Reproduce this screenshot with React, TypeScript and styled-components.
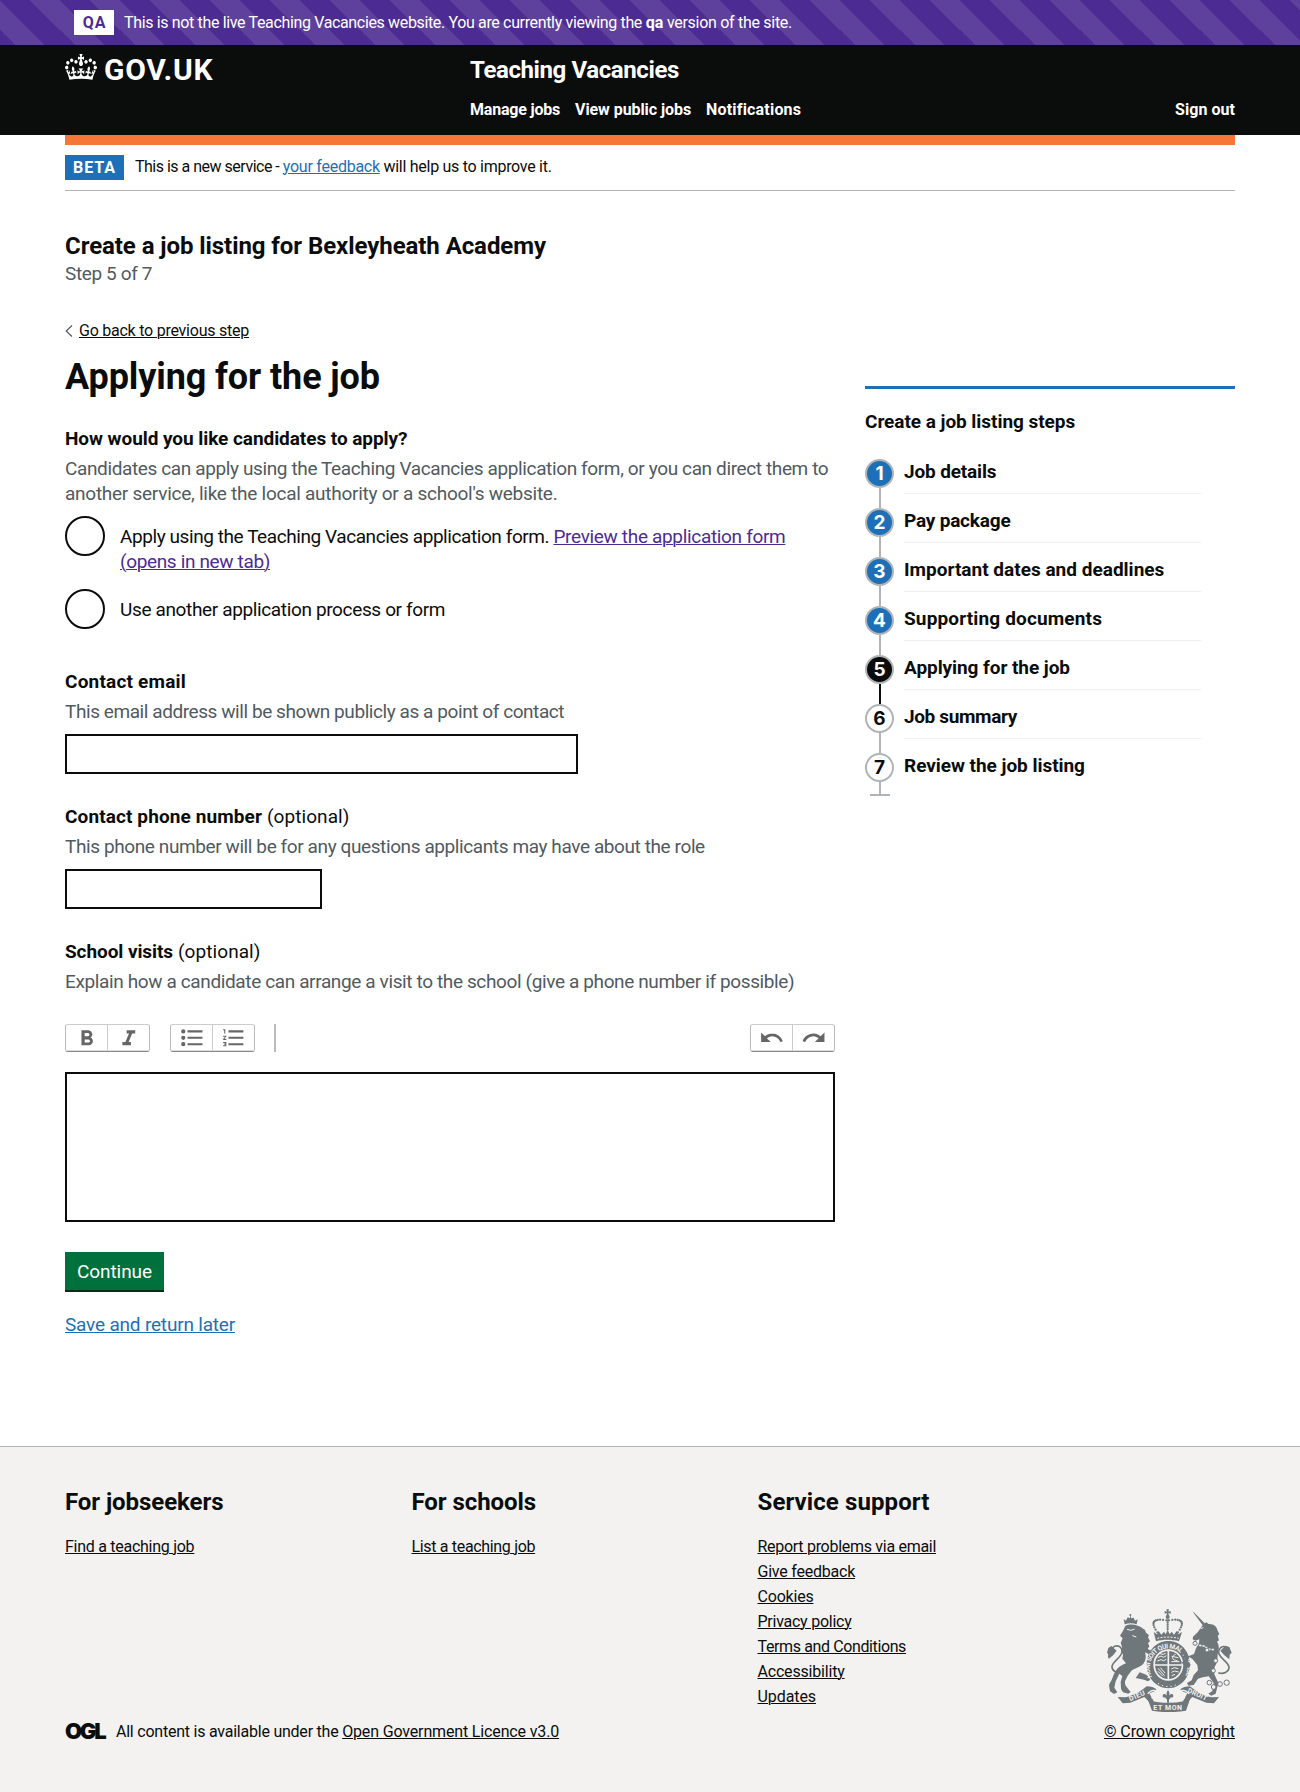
import React from 'react';
import styled, { createGlobalStyle } from 'styled-components';

const c = {
  ink: '#0b0c0c',
  grey: '#505a5f',
  line: '#b1b4b6',
  pale: '#f3f2f1',
  blue: '#1d70b8',
  purple: '#4c2c92',
  green: '#00703c',
};

const GlobalStyle = createGlobalStyle`
  *, *::before, *::after { box-sizing: border-box; }
  body {
    margin: 0;
    background: ${c.pale};
    color: ${c.ink};
    font-family: Roboto, "Liberation Sans", sans-serif;
    font-size: 19px;
    line-height: 25px;
    font-kerning: normal;
  }
  h1, h2, p, ul, ol { margin: 0; padding: 0; }
  ul, ol { list-style: none; }
`;

type Tracked = { $track?: number };

const Page = styled.div`
  min-height: 1792px;
  background: #fff;
  display: flex;
  flex-direction: column;
`;

const Container = styled.div`
  width: 1170px;
  margin: 0 auto;
`;

const Span = styled.span<Tracked>`
  letter-spacing: ${(p) => p.$track ?? 0}px;
  white-space: pre;
`;

const Link = styled.a<Tracked & { $color?: string }>`
  color: ${(p) => p.$color ?? c.ink};
  letter-spacing: ${(p) => p.$track ?? 0}px;
  text-decoration: underline;
  text-decoration-thickness: 1px;
  white-space: nowrap;
`;

/* ---------- environment banner ---------- */

const EnvBanner = styled.div`
  height: 45px;
  color: #fff;
  background: linear-gradient(45deg, #4c2c92 25%, #5e419d 25% 50%, #4c2c92 50% 75%, #5e419d 75%) 0 0 / 60px 60px;
`;

const EnvInner = styled(Container)`
  height: 45px;
  padding-left: 9px;
  display: flex;
  align-items: center;
  font-size: 16px;
  line-height: 20px;
  white-space: pre;
`;

const EnvTag = styled.strong`
  width: 40px;
  height: 25px;
  margin-right: 10px;
  background: #fff;
  color: ${c.purple};
  line-height: 25px;
  text-align: center;
  letter-spacing: 0.8px;
  text-indent: 1px;
`;

const EnvText = styled.span`
  padding-top: 1px;
`;

/* ---------- header ---------- */

const Header = styled.header`
  height: 90px;
  background: ${c.ink};
  color: #fff;
`;

const HeaderInner = styled(Container)`
  height: 90px;
  display: grid;
  grid-template-columns: 405px 1fr;
`;

const Logo = styled.div`
  display: flex;
  align-items: flex-start;
  padding-top: 9px;
  gap: 7px;
`;

const LogoText = styled.span`
  font-size: 30px;
  font-weight: 700;
  line-height: 32px;
  letter-spacing: 0.75px;
`;

const HeaderContent = styled.div`
  padding-top: 10px;
`;

const ServiceName = styled.div`
  font-size: 24px;
  font-weight: 700;
  line-height: 30px;
  letter-spacing: -0.39px;
`;

const Nav = styled.nav`
  display: flex;
  gap: 15px;
  margin-top: 15px;
  font-size: 16px;
  font-weight: 700;
  line-height: 20px;
`;

const NavItem = styled.span<Tracked & { $w?: number; $end?: boolean }>`
  width: ${(p) => (p.$w ? `${p.$w}px` : 'auto')};
  margin-left: ${(p) => (p.$end ? 'auto' : '0')};
  letter-spacing: ${(p) => p.$track ?? 0}px;
  white-space: nowrap;
`;

const OrangeBar = styled(Container)`
  height: 10px;
  background: #f47738;
`;

/* ---------- phase banner ---------- */

const Phase = styled(Container)`
  display: flex;
  align-items: center;
  height: 46px;
  border-bottom: 1px solid ${c.line};
  font-size: 16px;
  line-height: 20px;
  white-space: pre;
`;

const PhaseText = styled.span`
  padding-bottom: 1px;
`;

const PhaseTag = styled.strong`
  width: 59px;
  height: 25px;
  margin-right: 11px;
  padding-left: 8px;
  background: ${c.blue};
  color: #fff;
  line-height: 26px;
  letter-spacing: 0.95px;
`;

/* ---------- main ---------- */

const Main = styled(Container)`
  height: 1255px;
  padding-top: 40px;
`;

const JobHeading = styled.h2`
  font-size: 24px;
  line-height: 30px;
  font-weight: 700;
  letter-spacing: -0.07px;
`;

const StepCount = styled.p`
  color: ${c.grey};
  letter-spacing: -0.38px;
`;

const Columns = styled.div`
  display: grid;
  grid-template-columns: 770px 370px;
  column-gap: 30px;
  align-items: start;
`;

const BackRow = styled.div`
  display: flex;
  align-items: center;
  gap: 6px;
  height: 20px;
  margin: 35px 0 15px;
  font-size: 16px;
  line-height: 20px;
`;

const BackArrow = styled.svg`
  width: 8px;
  height: 12px;
  margin-bottom: 1px;
`;

const Title = styled.h1`
  font-size: 36px;
  line-height: 42px;
  font-weight: 700;
  letter-spacing: -0.1px;
  margin-bottom: 28px;
`;

const Field = styled.div<{ $gap: number }>`
  margin-bottom: ${(p) => p.$gap}px;
`;

const Label = styled.div`
  display: flex;
  gap: 5px;
  margin-bottom: 5px;
`;

const LabelStrong = styled.strong<Tracked>`
  letter-spacing: ${(p) => p.$track ?? 0}px;
`;

const Hint = styled.div<Tracked>`
  color: ${c.grey};
  letter-spacing: ${(p) => p.$track ?? 0}px;
  white-space: nowrap;
`;

const Input = styled.input<{ $w: number }>`
  display: block;
  width: ${(p) => p.$w}px;
  height: 40px;
  margin-top: 10px;
  border: 2px solid ${c.ink};
  border-radius: 0;
  background: #fff;
  outline: none;
`;

const Radios = styled.div`
  display: flex;
  flex-direction: column;
  gap: 10px;
  margin-top: 10px;
`;

const RadioRow = styled.label<{ $h: number }>`
  display: flex;
  height: ${(p) => p.$h}px;
`;

const RadioCircle = styled.span`
  flex: none;
  width: 40px;
  height: 40px;
  margin-right: 15px;
  border: 2px solid ${c.ink};
  border-radius: 50%;
`;

const RadioText = styled.span`
  padding-top: 8px;
`;

const Toolbar = styled.div`
  display: flex;
  height: 28px;
  margin: 30px 0 20px;
`;

const ToolGroup = styled.div<{ $gap?: number; $end?: boolean }>`
  display: flex;
  width: 85px;
  height: 28px;
  margin-left: ${(p) => (p.$end ? 'auto' : `${p.$gap ?? 0}px`)};
  border: 1px solid #bbb;
  border-top-color: #ccc;
  border-bottom-color: #888;
  border-radius: 3px;
`;

const Tool = styled.button`
  flex: 1;
  display: flex;
  align-items: center;
  justify-content: center;
  padding: 0;
  border: 0;
  border-bottom: 1px solid #ddd;
  background: transparent;
  & + & { border-left: 1px solid #ccc; }
`;

const ToolIcon = styled.svg`
  flex: none;
  width: 25.6px;
  height: 25.6px;
  fill: #666;
`;

const ToolRule = styled.div`
  width: 2px;
  height: 28px;
  margin-left: 19px;
  background: #bbb;
`;

const Editor = styled.div`
  height: 150px;
  border: 2px solid ${c.ink};
`;

const Continue = styled.button`
  display: block;
  width: 99px;
  height: 40px;
  margin: 30px 0 20px;
  padding: 1px 0 0;
  border: 0;
  border-bottom: 2px solid #002d18;
  background: ${c.green};
  color: #fff;
  font: 400 19px/37px Roboto, "Liberation Sans", sans-serif;
  letter-spacing: -0.07px;
`;

/* ---------- step navigation ---------- */

const Steps = styled.aside`
  margin-top: 100px;
  padding-top: 20px;
  border-top: 3px solid ${c.blue};
`;

const StepsTitle = styled.h2`
  height: 25px;
  font-size: 19px;
  line-height: 25px;
  letter-spacing: -0.05px;
  margin-bottom: 25px;
`;

type StepState = 'done' | 'current' | 'todo';

const StepItem = styled.li`
  display: grid;
  grid-template-columns: 29px 297px;
  column-gap: 10px;
  height: 49px;
`;

const Rail = styled.div<{ $state: StepState; $last: boolean }>`
  display: flex;
  flex-direction: column;
  align-items: center;
  &::after {
    content: '';
    width: ${(p) => (p.$last ? 20 : 2)}px;
    height: ${(p) => (p.$last ? 14 : 20)}px;
    margin-left: 1px;
    border-bottom: ${(p) => (p.$last ? `2px solid ${c.line}` : '0')};
    background: ${(p) =>
      p.$last
        ? `linear-gradient(${c.line}, ${c.line}) center / 2px 100% no-repeat`
        : p.$state === 'current'
          ? c.ink
          : c.line};
  }
`;

const StepNumber = styled.span<{ $state: StepState }>`
  flex: none;
  display: flex;
  align-items: center;
  justify-content: center;
  width: 29px;
  height: 29px;
  border: 2px solid ${c.line};
  border-radius: 50%;
  background: ${(p) => (p.$state === 'done' ? c.blue : p.$state === 'current' ? c.ink : '#fff')};
  color: ${(p) => (p.$state === 'todo' ? c.ink : '#fff')};
  font: 700 19px/25px Inter, sans-serif;
`;

const StepLabel = styled.div<Tracked & { $last: boolean }>`
  height: 35px;
  border-bottom: ${(p) => (p.$last ? '0' : '1px solid #eeefef')};
  font-weight: 700;
  letter-spacing: ${(p) => p.$track ?? 0}px;
`;

/* ---------- footer ---------- */

const Footer = styled.footer`
  flex: 1;
  border-top: 1px solid ${c.line};
  background: ${c.pale};
  padding-top: 40px;
`;

const FooterGrid = styled(Container)`
  display: grid;
  grid-template-columns: 346.5px 346px 1fr 131px;
  row-gap: 15px;
  font-size: 16px;
  line-height: 20px;
`;

const FooterHeading = styled.h2<Tracked>`
  font-size: 24px;
  line-height: 30px;
  margin-bottom: 20px;
  letter-spacing: ${(p) => p.$track ?? 0}px;
`;

const FooterList = styled.ul`
  display: flex;
  flex-direction: column;
  gap: 5px;
`;

const Licence = styled.div`
  grid-column: 1 / 4;
  display: flex;
  align-items: center;
  height: 20px;
  white-space: pre;
`;

const Ogl = styled.span`
  width: 51px;
  margin-top: -3px;
  font: 900 22px/20px Inter, sans-serif;
  letter-spacing: -2.2px;
`;

const Crown = styled.div`
  grid-column: 4;
  grid-row: 1 / 3;
  align-self: end;
  display: flex;
  flex-direction: column;
  align-items: center;
  gap: 10px;
`;

const icons = {
  bold: 'M15.6 11.8c1-.7 1.6-1.8 1.6-2.8a4 4 0 0 0-4-4H7v14h7c2.1 0 3.7-1.7 3.7-3.8 0-1.5-.8-2.8-2.1-3.4zM10 7.5h3a1.5 1.5 0 1 1 0 3h-3v-3zm3.5 9H10v-3h3.5a1.5 1.5 0 1 1 0 3z',
  italic: 'M10 5v3h2.2l-3.4 8H6v3h8v-3h-2.2l3.4-8H18V5h-8z',
  bullets:
    'M4 4a2 2 0 1 0 0 4 2 2 0 0 0 0-4zm0 6a2 2 0 1 0 0 4 2 2 0 0 0 0-4zm0 6a2 2 0 1 0 0 4 2 2 0 0 0 0-4zm4 3h14v-2H8v2zm0-6h14v-2H8v2zm0-8v2h14V5H8z',
  numbers:
    'M2 17h2v.5H3v1h1v.5H2v1h3v-4H2v1zm1-9h1V4H2v1h1v3zm-1 3h1.8L2 13.1v.9h3v-1H3.2L5 10.9V10H2v1zm5-6v2h14V5H7zm0 14h14v-2H7v2zm0-6h14v-2H7v2z',
  undo: 'M12.5 8c-2.6 0-5 1-6.9 2.6L2 7v9h9l-3.6-3.6A8 8 0 0 1 20 16l2.4-.8a10.5 10.5 0 0 0-10-7.2z',
  redo: 'M18.4 10.6a10.5 10.5 0 0 0-16.9 4.6L4 16a8 8 0 0 1 12.6-3.6L13 16h9V7l-3.6 3.6z',
};

const ToolButton = ({ name }: { name: keyof typeof icons }) => (
  <Tool type="button" aria-label={name}>
    <ToolIcon viewBox="0 0 24 24">
      <path d={icons[name]} />
    </ToolIcon>
  </Tool>
);

const HeaderCrown = () => (
  <svg width="32" height="26" viewBox="0 0 132 97" preserveAspectRatio="none" fill="#fff">
    <path d="M25 30.2c3.5 1.5 7.7-.2 9.1-3.7 1.5-3.6-.2-7.8-3.9-9.2-3.6-1.4-7.6.3-9.1 3.9-1.4 3.5.3 7.5 3.9 9zM9 39.5c3.6 1.5 7.8-.2 9.2-3.7 1.5-3.6-.2-7.8-3.9-9.1-3.6-1.5-7.6.2-9.1 3.8-1.4 3.5.3 7.5 3.8 9zM4.4 57.2c3.5 1.5 7.7-.2 9.1-3.8 1.5-3.6-.2-7.7-3.9-9.1-3.5-1.5-7.6.3-9.1 3.8-1.4 3.5.3 7.6 3.9 9.1zm38.3-21.4c3.5 1.5 7.7-.2 9.1-3.8 1.5-3.6-.2-7.7-3.9-9.1-3.6-1.5-7.6.3-9.1 3.8-1.3 3.6.4 7.7 3.9 9.1zm64.4-5.6c-3.6 1.5-7.8-.2-9.1-3.7-1.5-3.6.2-7.8 3.8-9.2 3.6-1.4 7.7.3 9.2 3.9 1.3 3.5-.4 7.5-3.9 9zm15.9 9.3c-3.6 1.5-7.7-.2-9.1-3.7-1.5-3.6.2-7.8 3.7-9.1 3.6-1.5 7.7.2 9.2 3.8 1.5 3.5-.3 7.5-3.8 9zm4.7 17.7c-3.6 1.5-7.8-.2-9.2-3.8-1.5-3.6.2-7.7 3.9-9.1 3.6-1.5 7.7.3 9.2 3.8 1.3 3.5-.4 7.6-3.9 9.1zM89.3 35.8c-3.6 1.5-7.8-.2-9.2-3.8-1.4-3.6.2-7.7 3.9-9.1 3.6-1.5 7.7.3 9.2 3.8 1.4 3.6-.3 7.7-3.9 9.1zM69.7 17.7l8.9 4.7V9.3l-8.9 2.8c-.2-.3-.5-.6-.9-.9L72.4 0H59.6l3.5 11.2c-.3.3-.6.5-.9.9l-8.8-2.8v13.1l8.8-4.7c.3.3.6.7.9.9l-5 15.4v.1c-.2.8-.4 1.6-.4 2.4 0 4.1 3.1 7.5 7 8.1h.2c.3 0 .7.1 1 .1.4 0 .7 0 1-.1h.2c4-.6 7.1-4.1 7.1-8.1 0-.8-.1-1.7-.4-2.4V34l-5.1-15.4c.4-.2.7-.6 1-.9zM66 92.8c16.9 0 32.8 1.1 47.1 3.2 4-16.9 8.9-26.7 14-33.5l-9.6-3.4c1 4.9 1.1 7.2 0 10.2-1.5-1.4-3-4.3-4.2-8.7L108.6 76c2.8-2 5-3.2 7.5-3.3-4.4 9.4-10 11.9-13.6 11.2-4.3-.8-6.3-4.6-5.6-7.9 1-4.7 5.7-5.9 8-.5 4.3-8.7-3-11.4-7.6-8.8 7.1-7.2 7.9-13.5 2.1-21.1-8 6.1-8.1 12.3-4.5 20.8-4.7-5.4-12.1-2.5-9.5 6.2 3.4-5.2 7.9-2 7.2 3.1-.6 4.3-6.4 7.8-13.5 7.2-10.3-.9-10.9-8-11.2-13.8 2.5-.5 7.1 1.8 11 7.3L80.2 60c-4.1 4.4-8 5.3-12.3 5.4 1.4-4.4 8-11.6 8-11.6H55.5s6.4 7.2 7.9 11.6c-4.2-.1-8-1-12.3-5.4l1.4 16.4c3.9-5.5 8.5-7.7 10.9-7.3-.3 5.8-.9 12.8-11.1 13.8-7.2.6-12.9-2.9-13.5-7.2-.7-5 3.8-8.3 7.1-3.1 2.7-8.7-4.6-11.6-9.4-6.2 3.7-8.5 3.6-14.7-4.6-20.8-5.8 7.6-5 13.9 2.2 21.1-4.7-2.6-11.9.1-7.7 8.8 2.3-5.5 7.1-4.2 8.1.5.7 3.3-1.3 7.1-5.7 7.9-3.5.7-9-1.8-13.5-11.2 2.5.1 4.7 1.3 7.5 3.3l-4.7-15.4c-1.2 4.4-2.7 7.2-4.3 8.7-1.1-3-.9-5.3 0-10.2l-9.5 3.4c5 6.9 9.9 16.7 14 33.5 14.8-2.1 30.8-3.2 47.7-3.2z" />
  </svg>
);

const ARMS = '#6f777b';
const beads = (x0: number, y0: number, x1: number, y1: number, cx: number, cy: number, n: number) =>
  Array.from({ length: n }, (_, i) => {
    const t = i / (n - 1);
    const u = 1 - t;
    return (
      <circle
        key={i}
        cx={u * u * x0 + 2 * u * t * cx + t * t * x1}
        cy={u * u * y0 + 2 * u * t * cy + t * t * y1}
        r="3.4"
      />
    );
  });

const CoatOfArms = () => (
  <svg width="125" height="103" viewBox="52 58 375 309" fill={ARMS}>
    {/* lion with its small crown */}
    <path d="M105 104l-3-16 7 5 5-10 7 3 1-10 3 10 7-2 4 9 8-4-3 15c-11-4-25-4-36 0z" />
    <circle cx="122" cy="76" r="3" />
    <path d="M107 108c10-4 25-5 37 0 12 3 16 10 22 12l2 8 10 9-3 6 6 12-6 5 4 10-5 8 12 6 8 16-3 4-8-2-5-8-12-6c4 12 3 24-5 34-9 11-26 13-34 20-6 6-9 12-13 16l-8 17c-1 9 2 15 9 22l8 10-7 5-16-4-6-10-1-21 5-18-9-7-11 23-4 19 9 14-10 5-12-8-3-18 2-6c8-10 9-22 16-34 8-14 19-21 33-26l-11-14 2-12-6-12 3-12-4-11 6-14-8-8 10-16z" />
    <path d="M150 248l22 8 10 14-7 5-12-5-25-5z" />
    <path d="M112 119l12 3 11-4M128 138l12 4" stroke="#f3f2f1" strokeWidth="3" fill="none" />
    <path
      d="M98 247c-14 6-31-2-31-16 0-15 28-27 30-44 1-13-10-22-22-17-9 4-11 13-8 19M72 178c-8 2-14 12-15 25"
      fill="none"
      stroke={ARMS}
      strokeWidth="5"
    />
    <path d="M65 169l16 14-10 13-14 12-1-14-4-5 4-14z" />

    {/* central crown */}
    <path d="M230 59h8l-2 7 7-2v8l-7-2 2 8h-8l2-8-7 2v-8l7 2z" />
    <circle cx="234" cy="82" r="6" />
    {beads(230, 92, 203, 128, 170, 82, 12)}
    {beads(238, 92, 265, 128, 298, 82, 12)}
    {beads(234, 92, 234, 118, 234, 104, 5)}
    <path d="M199 155l-7-28 10 7 5-10 8 11 8-9 5 8 6-14 6 14 6-8 7 9 8-11 5 10 11-7-9 28c-22-6-47-6-69 0z" />
    <path d="M203 146c20-5 43-5 64 0" stroke="#f3f2f1" strokeWidth="3" fill="none" strokeDasharray="6 4" />

    {/* garter and quartered shield */}
    <path
      fillRule="evenodd"
      d="M236 154c37 0 65 31 65 70s-28 72-65 72-65-33-65-72 28-70 65-70zm0 25c-26 0-45 20-45 46s19 48 45 48 45-22 45-48-19-46-45-46z"
    />
    <path d="M236 184c-23 0-40 18-40 41s17 43 40 43 40-20 40-43-17-41-40-41z" />
    <path d="M236 182v88M194 226h84" stroke="#f3f2f1" strokeWidth="5" />
    <path
      d="M204 204l10-5 8 4 8-5M203 214l11-4 8 3 8-4M211 192l9 2 8-3M258 194c-10 3-12 9-8 14s14 3 16 9M246 200l20 4M245 216h24M205 236l20 22M212 234l14 16M205 245l15 15M245 238l9-4 12 3M245 248l10-4 12 3M246 258l10-4"
      stroke="#f3f2f1"
      strokeWidth="3"
      fill="none"
    />
    <path id="garter-arc" d="M187 262a56 58 0 1 1 100-3" fill="none" />
    <text fontFamily="Roboto, sans-serif" fontSize="20" fontWeight="700" fill="#f3f2f1">
      <textPath href="#garter-arc" textLength="232">
        HONI SOIT QUI MAL Y PENSE
      </textPath>
    </text>
    <path d="M205 281c20 13 43 13 62 0" stroke="#f3f2f1" strokeWidth="3" strokeDasharray="4 9" fill="none" />

    {/* unicorn */}
    <path d="M309 66l5 3 34 35-7 5z" />
    <path d="M341 104l9-6 7 5c17-1 25 10 26 18l6 13-5 4 4 14-6 4c8 12 6 26 2 37l-1 23-8 16-1 22 12 26-8 32-13 6-9-6 12-8 4-24-15-20-18 3-14 4-13 19-16 2-4-8 14-8 6-16 13-14-2-16-14-17-10-7-5 11 9 12-5 10-12-4-13-16 10 3 4-2-3-20-9-3-2-9 9-4 9 8 5 12 17-7 6-17 9-17 1-10-12 4-8-4 1-8 14-13z" />
    <path d="M312 156l13 10 17 3 17 10 15 1" stroke="#f3f2f1" strokeWidth="5" fill="none" strokeDasharray="7 3" />
    <path d="M333 117l8-3" stroke="#f3f2f1" strokeWidth="3" />
    <path
      d="M386 249c14 6 32-2 32-16 0-16-29-27-31-44-1-12 10-22 22-17 8 4 10 12 7 19"
      fill="none"
      stroke={ARMS}
      strokeWidth="5"
    />
    <path d="M407 168l-15 15 12 14 15 12 1-14 6-6-7-17z" />
    <g fill="#f3f2f1" stroke={ARMS} strokeWidth="3">
      <circle cx="316" cy="161" r="6" />
      <circle cx="352" cy="181" r="6" />
      <circle cx="378" cy="213" r="6" />
      <circle cx="371" cy="243" r="6" />
      <circle cx="359" cy="279" r="7" />
      <circle cx="372" cy="292" r="7" />
      <circle cx="391" cy="283" r="7" />
      <circle cx="411" cy="279" r="8" />
    </g>

    {/* motto ribbon */}
    <path d="M84 322l22 1c22-4 42-14 65-33 12 0 23 4 29 9l-5 6-16 6 14 25-14 1-15-15-42 17-23 2z" />
    <path d="M388 322l-22 1c-22-4-42-14-65-33-12 0-23 4-29 9l5 6 16 6-14 25 14 1 15-15 42 17 23 2z" />
    <path d="M172 318l18 17c32 6 62 6 92 0l17-17 4 5-14 40c-34 6-70 6-102 0l-13-34z" />
    <path d="M174 312c16-16 30-10 22 2l-10 12M298 312c-16-16-30-10-22 2l10 12" fill="none" stroke="#f3f2f1" strokeWidth="4" />
    <g fontFamily="Roboto, sans-serif" fontWeight="700" fill="#f3f2f1">
      <text fontSize="21" textLength="50" transform="translate(122 335) rotate(-24)">
        DIEU
      </text>
      <text fontSize="21" x="191" y="360" textLength="86">
        ET MON
      </text>
      <text fontSize="21" textLength="62" transform="translate(292 308) rotate(24)">
        DROIT
      </text>
    </g>
    <path d="M235 301c5 7 6 12 2 20 3-10 14-10 14-2 0 5-6 6-8 3 0 5-3 6-5 7v10h-6v-10c-2-1-5-2-5-7-2 3-8 2-8-3 0-8 11-8 14 2-4-8-3-13 2-20z" />
  </svg>
);

const steps: { label: string; state: StepState; track: number }[] = [
  { label: 'Job details', state: 'done', track: -0.15 },
  { label: 'Pay package', state: 'done', track: -0.2 },
  { label: 'Important dates and deadlines', state: 'done', track: 0.01 },
  { label: 'Supporting documents', state: 'done', track: 0.15 },
  { label: 'Applying for the job', state: 'current', track: -0.07 },
  { label: 'Job summary', state: 'todo', track: -0.36 },
  { label: 'Review the job listing', state: 'todo', track: -0.04 },
];

const footerColumns: { heading: string; track: number; links: [string, number][] }[] = [
  { heading: 'For jobseekers', track: -0.07, links: [['Find a teaching job', -0.27]] },
  { heading: 'For schools', track: -0.07, links: [['List a teaching job', -0.33]] },
  {
    heading: 'Service support',
    track: 0.1,
    links: [
      ['Report problems via email', -0.29],
      ['Give feedback', -0.22],
      ['Cookies', -0.2],
      ['Privacy policy', -0.25],
      ['Terms and Conditions', -0.38],
      ['Accessibility', -0.19],
      ['Updates', -0.08],
    ],
  },
];

export default function App() {
  return (
    <Page>
      <GlobalStyle />
      <EnvBanner>
        <EnvInner>
          <EnvTag>QA</EnvTag>
          <EnvText>
            <Span $track={-0.35}>This is not the live Teaching Vacancies website. You are currently viewing the </Span>
            <strong>qa</strong>
            <Span $track={-0.29}> version of the site.</Span>
          </EnvText>
        </EnvInner>
      </EnvBanner>

      <Header>
        <HeaderInner>
          <Logo>
            <HeaderCrown />
            <LogoText>GOV.UK</LogoText>
          </Logo>
          <HeaderContent>
            <ServiceName>Teaching Vacancies</ServiceName>
            <Nav>
              <NavItem $w={90} $track={-0.2}>Manage jobs</NavItem>
              <NavItem $w={116} $track={-0.07}>View public jobs</NavItem>
              <NavItem $w={95} $track={0.19}>Notifications</NavItem>
              <NavItem $end $track={0.05}>Sign out</NavItem>
            </Nav>
          </HeaderContent>
        </HeaderInner>
      </Header>
      <OrangeBar />

      <Phase>
        <PhaseTag>BETA</PhaseTag>
        <PhaseText>
          <Span $track={-0.5}>This is a new service - </Span>
          <Link $color={c.blue} $track={-0.25}>your feedback</Link>
          <Span $track={-0.28}> will help us to improve it.</Span>
        </PhaseText>
      </Phase>

      <Main as="main">
        <JobHeading>Create a job listing for Bexleyheath Academy</JobHeading>
        <StepCount>Step 5 of 7</StepCount>

        <Columns>
          <div>
            <BackRow>
              <BackArrow viewBox="0 0 8 12">
                <path d="M7 .5 1.2 6 7 11.5" fill="none" stroke={c.grey} strokeWidth="1.2" />
              </BackArrow>
              <Link $track={-0.24}>Go back to previous step</Link>
            </BackRow>
            <Title>Applying for the job</Title>

            <Field $gap={40}>
              <Label>
                <LabelStrong $track={-0.06}>How would you like candidates to apply?</LabelStrong>
              </Label>
              <Hint $track={-0.377}>
                Candidates can apply using the Teaching Vacancies application form, or you can direct them to
              </Hint>
              <Hint $track={-0.26}>another service, like the local authority or a school's website.</Hint>
              <Radios>
                <RadioRow $h={63}>
                  <RadioCircle />
                  <RadioText>
                    <Span $track={-0.425}>Apply using the Teaching Vacancies application form. </Span>
                    <Link $color={c.purple} $track={-0.33}>Preview the application form</Link>
                    <br />
                    <Link $color={c.purple} $track={-0.35}>(opens in new tab)</Link>
                  </RadioText>
                </RadioRow>
                <RadioRow $h={40}>
                  <RadioCircle />
                  <RadioText>
                    <Span $track={-0.36}>Use another application process or form</Span>
                  </RadioText>
                </RadioRow>
              </Radios>
            </Field>

            <Field $gap={30}>
              <Label>
                <LabelStrong $track={0.2}>Contact email</LabelStrong>
              </Label>
              <Hint $track={-0.43}>This email address will be shown publicly as a point of contact</Hint>
              <Input $w={513} type="email" />
            </Field>

            <Field $gap={30}>
              <Label>
                <LabelStrong $track={0.11}>Contact phone number</LabelStrong>
                <Span $track={0.07}>(optional)</Span>
              </Label>
              <Hint $track={-0.4}>
                This phone number will be for any questions applicants may have about the role
              </Hint>
              <Input $w={257} type="tel" />
            </Field>

            <Label>
              <LabelStrong $track={-0.08}>School visits</LabelStrong>
              <Span $track={0.07}>(optional)</Span>
            </Label>
            <Hint $track={-0.375}>
              Explain how a candidate can arrange a visit to the school (give a phone number if possible)
            </Hint>
            <Toolbar>
              <ToolGroup>
                <ToolButton name="bold" />
                <ToolButton name="italic" />
              </ToolGroup>
              <ToolGroup $gap={20}>
                <ToolButton name="bullets" />
                <ToolButton name="numbers" />
              </ToolGroup>
              <ToolRule />
              <ToolGroup $end>
                <ToolButton name="undo" />
                <ToolButton name="redo" />
              </ToolGroup>
            </Toolbar>
            <Editor />
            <Continue type="button">Continue</Continue>
            <Link $color={c.blue} $track={-0.19}>Save and return later</Link>
          </div>

          <Steps>
            <StepsTitle>Create a job listing steps</StepsTitle>
            <ol>
              {steps.map((s, i) => {
                const last = i === steps.length - 1;
                return (
                  <StepItem key={s.label}>
                    <Rail $state={s.state} $last={last}>
                      <StepNumber $state={s.state}>{i + 1}</StepNumber>
                    </Rail>
                    <StepLabel $track={s.track} $last={last}>{s.label}</StepLabel>
                  </StepItem>
                );
              })}
            </ol>
          </Steps>
        </Columns>
      </Main>

      <Footer>
        <FooterGrid>
          {footerColumns.map((col) => (
            <div key={col.heading}>
              <FooterHeading $track={col.track}>{col.heading}</FooterHeading>
              <FooterList>
                {col.links.map(([text, track]) => (
                  <li key={text}>
                    <Link $track={track}>{text}</Link>
                  </li>
                ))}
              </FooterList>
            </div>
          ))}
          <Licence>
            <Ogl>OGL</Ogl>
            <Span $track={-0.23}>All content is available under the </Span>
            <Link $track={-0.15}>Open Government Licence v3.0</Link>
          </Licence>
          <Crown>
            <CoatOfArms />
            <Link $track={-0.09}>© Crown copyright</Link>
          </Crown>
        </FooterGrid>
      </Footer>
    </Page>
  );
}
